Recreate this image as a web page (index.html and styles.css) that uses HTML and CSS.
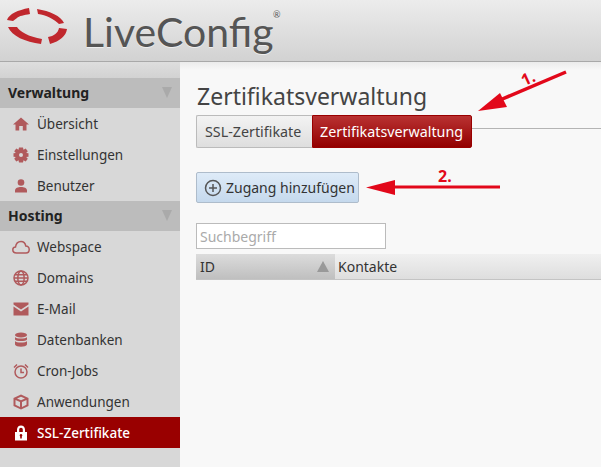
FILE: index.html
```html
<!DOCTYPE html>
<html lang="de">
<head>
  <meta charset="UTF-8">
  <title>LiveConfig</title>
  <link rel="stylesheet" href="styles.css">
</head>
<body>
  <header class="topbar">
    <svg class="logo-mark" width="60" height="37" viewBox="7 8 60 37">
      <path d="M29 8 L30 14 C24 15 19 16 17 18 L13 21 L7 20 C9 14 18 10 29 8 Z"/>
      <path d="M37 9 L38 14 C46 15 54 19 59 24 L64 23 C61 16 50 11 37 9 Z"/>
      <path d="M8 27 L17 27 C19 31 29 37 42 39 L41 44 C25 42 12 36 8 27 Z"/>
      <path d="M59 28 L67 29 C66 36 60 41 50 44 L48 37 C54 36 58 33 59 28 Z"/>
    </svg>
    <span class="brand">LiveConfig<sup class="reg">®</sup></span>
  </header>

  <div class="layout">
    <nav class="sidebar">
      <div class="side-top"></div>

      <div class="side-head">Verwaltung <span class="tri"></span></div>
      <a class="side-item">
        <svg class="ico" viewBox="0 0 16 16"><path d="M8 1.500 L16 8.500 L13.500 8.500 L13.500 14.500 L9.800 14.500 L9.800 10 L6.200 10 L6.200 14.500 L2.500 14.500 L2.500 8.500 L0 8.500 Z"/></svg>
        Übersicht
      </a>
      <a class="side-item">
        <svg class="ico" viewBox="0 0 16 16"><path fill-rule="evenodd" d="M6 0.500 H10 L10.500 2.800 L12.700 1.600 L14.800 4.200 L13.200 6 L15.500 6.300 V9.700 L13.200 10 L14.800 11.800 L12.700 14.400 L10.500 13.200 L10 15.500 H6 L5.500 13.200 L3.300 14.400 L1.200 11.800 L2.800 10 L0.500 9.700 V6.300 L2.800 6 L1.200 4.200 L3.300 1.600 L5.500 2.800 Z M8 6 A2 2 0 1 0 8 10 A2 2 0 1 0 8 6 Z"/></svg>
        Einstellungen
      </a>
      <a class="side-item">
        <svg class="ico" viewBox="0 0 16 16"><circle cx="8" cy="4.500" r="3.300"/><path d="M2 14.500 V12.500 C2 10 5 9 8 9 C11 9 14 10 14 12.500 V14.500 Z"/></svg>
        Benutzer
      </a>

      <div class="side-head">Hosting <span class="tri"></span></div>
      <a class="side-item">
        <svg class="ico wide line" viewBox="0 0 18 16"><path d="M4.500 14 C2 14 0.800 12.300 0.800 10.800 C0.800 9 2.300 8 3.500 8 C4 4.500 6.300 2.500 9 2.500 C11.500 2.500 13.300 4.500 13.800 7 C15.800 7 17.200 8.800 17.200 10.500 C17.200 12.300 16 14 14 14 Z"/></svg>
        Webspace
      </a>
      <a class="side-item">
        <svg class="ico line" viewBox="0 0 16 16"><circle cx="8" cy="8" r="7"/><ellipse cx="8" cy="8" rx="3.200" ry="7"/><path d="M1 8 H15 M2 4.800 H14 M2 11.200 H14"/></svg>
        Domains
      </a>
      <a class="side-item">
        <svg class="ico" viewBox="0 0 16 16"><path d="M0.500 1.500 H15.500 V3.500 L8 8.500 L0.500 3.500 Z M0.500 5.500 L8 10.500 L15.500 5.500 V14.500 H0.500 Z"/></svg>
        E-Mail
      </a>
      <a class="side-item">
        <svg class="ico" viewBox="0 0 16 16"><ellipse cx="8" cy="3" rx="6" ry="2.500"/><path d="M2 5 C3 7 13 7 14 5 V7.500 C13 9.500 3 9.500 2 7.500 Z M2 9 C3 11 13 11 14 9 V12.500 C13 15.500 3 15.500 2 12.500 Z"/></svg>
        Datenbanken
      </a>
      <a class="side-item">
        <svg class="ico line" viewBox="0 0 16 16"><circle cx="8" cy="9" r="6"/><path d="M8 5.500 V9.500 H11 M1 4.500 L4 1.500 M15 4.500 L12 1.500"/></svg>
        Cron-Jobs
      </a>
      <a class="side-item">
        <svg class="ico" viewBox="0 0 16 16"><path fill-rule="evenodd" d="M8 0.500 L15.500 4 V12 L8 15.500 L0.500 12 V4 Z M8 2.800 L4 4.500 L8 6.300 L12 4.500 Z M2.500 6 V10.800 L7 13 V8 Z M13.500 6 L9 8 V13 L13.500 10.800 Z"/></svg>
        Anwendungen
      </a>
      <a class="side-item active">
        <svg class="ico" viewBox="0 0 16 16"><path fill-rule="evenodd" d="M4 7 V4.800 C4 2 5.800 0.500 8 0.500 C10.200 0.500 12 2 12 4.800 V7 H14 V15.500 H2 V7 Z M6.200 7 H9.800 V4.800 C9.800 3.400 9.200 2.700 8 2.700 C6.800 2.700 6.200 3.400 6.200 4.800 Z M8 9 A1.400 1.400 0 0 0 7.200 11.500 V13.500 H8.800 V11.500 A1.400 1.400 0 0 0 8 9 Z"/></svg>
        SSL-Zertifikate
      </a>
    </nav>

    <main class="content">
      <h1 class="page-title">Zertifikatsverwaltung</h1>
      <div class="tabs">
        <a class="tab">SSL-Zertifikate</a>
        <a class="tab current">Zertifikatsverwaltung</a>
      </div>

      <a class="add-btn">
        <svg class="add-ico" viewBox="0 0 18 18"><circle cx="9" cy="9" r="7.500"/><path d="M9 5 V13 M5 9 H13"/></svg>
        Zugang hinzufügen
      </a>

      <input class="search" type="text" placeholder="Suchbegriff">

      <div class="table-head">
        <div class="col-id">ID <span class="sort"></span></div>
        <div class="col-contacts">Kontakte</div>
      </div>
    </main>
  </div>

  <!-- annotations on top of the screenshot -->
  <svg class="marks" width="601" height="467" viewBox="0 0 601 467">
    <path d="M566 72 L500 100" stroke="#e2081a" stroke-width="3.500" fill="none"/>
    <path d="M478 111 L500 93 L507 107 Z" fill="#e2081a"/>
    <path d="M500 187 L390 187" stroke="#e2081a" stroke-width="3" fill="none"/>
    <path d="M366 187.500 L395 180 L395 195 Z" fill="#e2081a"/>
  </svg>
  <span class="mark-one">1.</span>
  <span class="mark-two">2.</span>
</body>
</html>
```

FILE: styles.css
```css
*{
  margin: 0;
  padding: 0;
  box-sizing: border-box;
}
html, body{
  height: 100%;
  overflow: hidden;
}
body{
  font-family: "Noto Sans", Arial, sans-serif;
  font-size: 14px;
  color: #333;
  background-color: #f8f8f8;
  position: relative;
}
.topbar{
  height: 62px;
  display: flex;
  align-items: flex-start;
  gap: 16px;
  padding: 8px 0 0 7px;
  background: linear-gradient(#ececec, #d2d2d2);
  border-bottom: 1px solid #a9a9a9;
}
.logo-mark{
  fill: #c0272d;
  flex: none;
}
.brand{
  font-family: Lato, sans-serif;
  font-size: 41px;
  font-weight: 400;
  line-height: 48px;
  color: #555;
  position: relative;
  text-shadow: 0 1px 0 #eee;
}
.reg{
  font-size: 9px;
  position: absolute;
  top: 1px;
  right: -7px;
  line-height: 12px;
}
.layout{
  display: flex;
  height: 405px;
}
.sidebar{
  width: 180px;
  background-color: #d8d8d8;
  font-size: 13.500px;
}
.side-top{
  height: 16px;
  background: linear-gradient(#dedede, #d2d2d2);
}
.side-head{
  height: 30px;
  display: flex;
  align-items: center;
  justify-content: space-between;
  padding: 0 8px 2px;
  font-size: 14px;
  font-weight: 700;
  color: #222;
  background-color: #bcbcbc;
}
.tri{
  width: 0;
  height: 0;
  border-left: 5px solid transparent;
  border-right: 5px solid transparent;
  border-top: 11px solid #aaa;
}
.side-item{
  height: 31px;
  display: flex;
  align-items: center;
  gap: 8px;
  padding-left: 13px;
  color: #333;
}
.ico{
  width: 16px;
  height: 16px;
  fill: #b05a5c;
  flex: none;
}
.ico.line{
  fill: none;
  stroke: #b05a5c;
  stroke-width: 1.500;
}
.ico.wide{
  width: 18px;
  margin-left: -1px;
  margin-right: -1px;
}
.side-item.active{
  background-color: #990000;
  color: #fff;
  font-weight: 500;
}
.side-item.active .ico{
  fill: #fff;
}
.content{
  flex: 1;
  min-width: 0;
  padding: 18px 0 0 16px;
  background: linear-gradient(#ececec, #f8f8f8 8px);
}
.page-title{
  font-size: 23px;
  font-weight: 400;
  line-height: 32px;
  color: #444;
  padding-left: 1px;
}
.tabs{
  display: flex;
  height: 33px;
  margin-top: 3px;
  font-size: 14.300px;
  background: linear-gradient(transparent 13px, #b4b4b4 13px, #b4b4b4 14px, transparent 14px);
}
.tab{
  width: 116px;
  padding-left: 8px;
  line-height: 31px;
  border: 1px solid #bbb;
  border-right: 0;
  border-radius: 2px 0 0 2px;
  background: linear-gradient(#f3f3f3, #dedede);
  color: #444;
}
.tab.current{
  width: 160px;
  padding-left: 7px;
  border: 1px solid #990000;
  border-radius: 0 2px 2px 0;
  background: linear-gradient(#b93232, #930000);
  color: #fff;
}
.add-btn{
  display: flex;
  align-items: center;
  gap: 4px;
  width: 163px;
  height: 31px;
  margin-top: 24px;
  padding-left: 7px;
  border: 1px solid #aebccb;
  border-radius: 2px;
  background: linear-gradient(#deebf8, #c5d9ed);
  color: #333;
}
.add-ico{
  width: 18px;
  height: 18px;
  fill: none;
  stroke: #555;
  stroke-width: 1.500;
}
.search{
  display: block;
  width: 190px;
  height: 26px;
  margin-top: 20px;
  padding: 0 3px;
  border: 1px solid #bbb;
  background-color: #fff;
  font-family: inherit;
  font-size: 14px;
}
.search::placeholder{
  color: #aaa;
}
.table-head{
  display: flex;
  height: 26px;
  margin-top: 5px;
  line-height: 25px;
  border-bottom: 1px solid #c4c4c4;
}
.col-id{
  width: 139px;
  display: flex;
  align-items: center;
  justify-content: space-between;
  padding: 0 6px 0 4px;
  background: linear-gradient(#dcdcdc, #bfbfbf);
}
.sort{
  width: 0;
  height: 0;
  border-left: 6px solid transparent;
  border-right: 6px solid transparent;
  border-bottom: 11px solid #999;
}
.col-contacts{
  flex: 1;
  padding-left: 3px;
  background: linear-gradient(#f0f0f0, #dedede);
}
.marks{
  position: absolute;
  top: 0;
  left: 0;
  pointer-events: none;
}
.mark-one, .mark-two{
  position: absolute;
  color: #e2081a;
  font-weight: 700;
  font-size: 16px;
  line-height: 18px;
}
.mark-one{
  left: 521px;
  top: 69px;
  transform: rotate(-25deg);
}
.mark-two{
  left: 438px;
  top: 167px;
}
```
